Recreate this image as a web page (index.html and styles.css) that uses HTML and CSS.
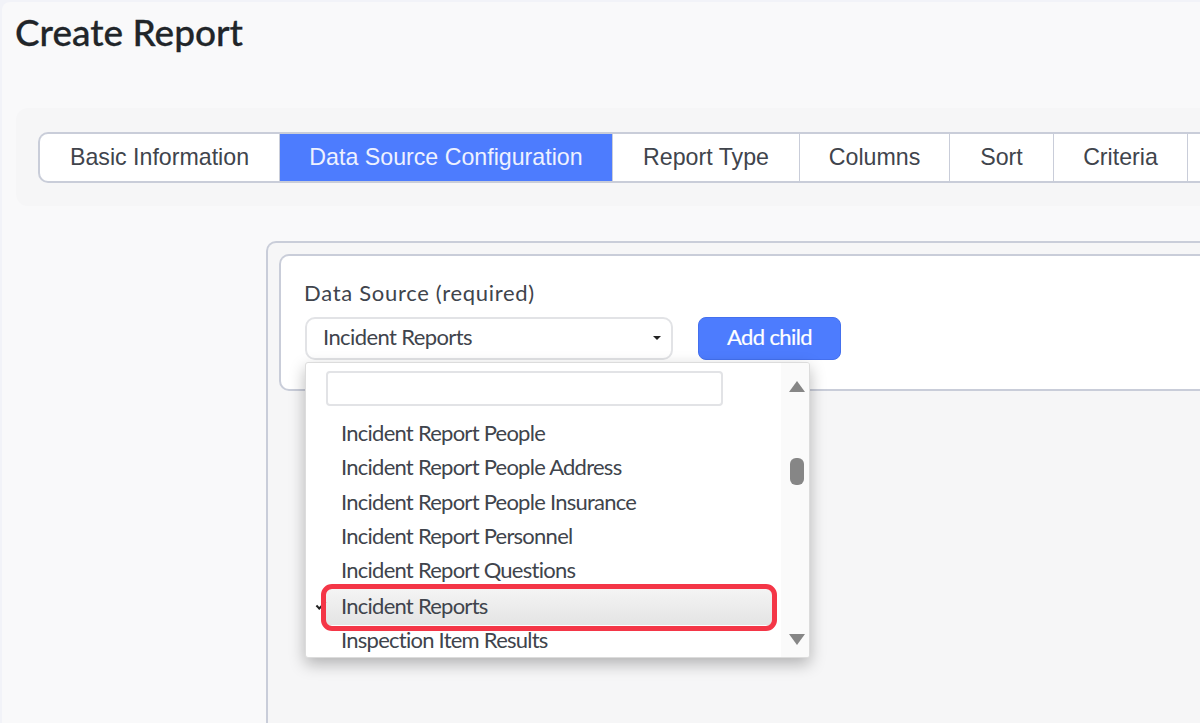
FILE: index.html
```html
<!DOCTYPE html>
<html lang="en">
<head>
  <meta charset="UTF-8">
  <meta name="viewport" content="width=device-width, initial-scale=1.0">
  <title>Create Report</title>
  <link rel="stylesheet" href="styles.css">
</head>
<body>
  <div class="page">
    <h1 class="page-title">Create Report</h1>

    <div class="tab-band">
      <div class="tabs">
        <div class="tab tab-first">Basic Information</div>
        <div class="tab tab-active">Data Source Configuration</div>
        <div class="tab tab-type">Report Type</div>
        <div class="tab tab-columns">Columns</div>
        <div class="tab tab-sort">Sort</div>
        <div class="tab tab-criteria">Criteria</div>
        <div class="tab tab-rest"></div>
      </div>
    </div>

    <div class="panel-outer">
      <div class="panel-inner">
        <label class="field-label">Data Source (required)</label>
        <div class="field-row">
          <div class="select-box">
            <span>Incident Reports</span>
            <span class="caret"></span>
          </div>
          <button class="add-child">Add child</button>
        </div>

        <div class="dropdown">
          <div class="dropdown-main">
            <div class="search-wrap"><input class="search-input" type="text"></div>
            <ul class="options">
              <li>Incident Report People</li>
              <li>Incident Report People Address</li>
              <li>Incident Report People Insurance</li>
              <li>Incident Report Personnel</li>
              <li>Incident Report Questions</li>
              <li class="selected">Incident Reports</li>
              <li>Inspection Item Results</li>
            </ul>
          </div>
          <div class="scrollbar">
            <span class="arrow-up"></span>
            <span class="thumb"></span>
            <span class="arrow-down"></span>
          </div>
        </div>
      </div>
    </div>

    <div class="callout"></div>
  </div>
</body>
</html>
```

FILE: styles.css
```css
html, body {
  margin: 0;
  height: 100%;
  overflow: hidden;
  background-color: #f2f3f8;
}
.page {
  position: relative;
  height: 723px;
  box-sizing: border-box;
  padding: 0 0 0 16px;
  margin-left: 2px;
  margin-top: 2px;
  background-color: #f9f9fa;
  border-radius: 8px 0 0 0;
  font-family: "Lato", sans-serif;
  color: #343a40;
  overflow: hidden;
}
.page-title {
  margin: 0;
  padding-top: 10px;
  margin-left: -3px;
  font-size: 37px;
  line-height: 40px;
  font-weight: 500;
  color: #212529;
  -webkit-text-stroke: 0.3px #212529;
}
.tab-band {
  margin-top: 56px;
  margin-left: -2px;
  height: 98px;
  box-sizing: border-box;
  padding: 24px 0 0 22px;
  background-color: #f6f6f7;
  border-radius: 12px 0 0 12px;
}
.tabs {
  display: flex;
  height: 51px;
  box-sizing: border-box;
  border: 2px solid #c9cdd9;
  border-right: none;
  border-radius: 10px 0 0 10px;
  background-color: #fff;
  font-family: "Liberation Sans", Arial, sans-serif;
  font-size: 23.2px;
  color: #40444c;
}
.tab {
  flex: none;
  display: flex;
  align-items: center;
  justify-content: center;
  box-sizing: border-box;
  border-right: 1px solid #c9cdd9;
}
.tab-first { width: 240px; border-radius: 8px 0 0 8px; }
.tab-active { width: 333px; background-color: #4d7cfe; color: #eef1ff; }
.tab-type { width: 187px; }
.tab-columns { width: 150px; }
.tab-sort { width: 104px; }
.tab-criteria { width: 134px; }
.tab-rest { width: 40px; border-right: none; }
.panel-outer {
  margin-top: 35px;
  margin-left: 248px;
  height: 500px;
  box-sizing: border-box;
  padding: 11px 0 0 11px;
  background-color: #f6f6f7;
  border: 2px solid #c9cdd9;
  border-right: none;
  border-radius: 10px 0 0 0;
}
.panel-inner {
  position: relative;
  height: 137px;
  box-sizing: border-box;
  padding: 23px 0 0 24px;
  background-color: #fff;
  border: 2px solid #c9cdd9;
  border-right: none;
  border-radius: 10px 0 0 10px;
}
.field-label {
  display: block;
  margin-left: -1px;
  font-size: 22px;
  line-height: 28px;
  letter-spacing: 0.7px;
  color: #40444c;
}
.field-row {
  display: flex;
  align-items: flex-start;
  gap: 25px;
  margin-top: 10px;
}
.select-box {
  display: flex;
  align-items: center;
  justify-content: space-between;
  width: 368px;
  height: 43px;
  box-sizing: border-box;
  padding: 0 10px 4px 16px;
  background-color: #fff;
  border: 2px solid #e2e3e6;
  border-radius: 10px;
  font-size: 22px;
  letter-spacing: -0.6px;
  color: #40444c;
}
.caret {
  width: 0;
  height: 0;
  margin-top: 2px;
  border-left: 4.5px solid transparent;
  border-right: 4.5px solid transparent;
  border-top: 4.5px solid #222;
}
.add-child {
  width: 143px;
  height: 43px;
  padding: 0 0 4px;
  background-color: #4d7cfe;
  border: 1px solid #4470ee;
  border-radius: 8px;
  font-family: "Lato", sans-serif;
  font-size: 22px;
  letter-spacing: -0.6px;
  color: #fff;
  -webkit-text-stroke: 0.2px #fff;
}
.dropdown {
  position: absolute;
  left: 24px;
  top: 106px;
  display: flex;
  width: 505px;
  height: 296px;
  box-sizing: border-box;
  background-color: #fff;
  border: 1px solid #dcdcdc;
  border-radius: 3px;
  box-shadow: 0 6px 16px rgba(0, 0, 0, 0.28);
  overflow: hidden;
}
.dropdown-main {
  flex: 1;
  padding: 8px 0 0 20px;
}
.search-input {
  display: block;
  width: 397px;
  height: 35px;
  box-sizing: border-box;
  border: 2px solid #e2e3e6;
  border-radius: 4px;
  background-color: #fff;
}
.options {
  margin: 10px 0 0;
  padding: 0;
  list-style: none;
  font-size: 22px;
  line-height: 34.3px;
  letter-spacing: -0.75px;
  color: #40444c;
}
.options li {
  padding-left: 15px;
  margin-right: 8px;
}
.options .selected {
  position: relative;
  line-height: 38px;
  margin-bottom: -2px;
  background-image: linear-gradient(#f5f5f5, #e4e4e4);
}
.options .selected::before {
  content: "";
  position: absolute;
  left: -10px;
  top: 15px;
  width: 8px;
  height: 3px;
  border-left: 2px solid #222;
  border-bottom: 2px solid #222;
  transform: rotate(-45deg);
}
.scrollbar {
  position: relative;
  width: 28px;
  flex: none;
  background-color: #fafafa;
}
.arrow-up, .arrow-down {
  position: absolute;
  left: 8px;
  width: 0;
  height: 0;
  border-left: 8px solid transparent;
  border-right: 8px solid transparent;
}
.arrow-up { top: 18px; border-bottom: 11px solid #868686; }
.arrow-down { top: 271px; border-top: 11px solid #868686; }
.thumb {
  position: absolute;
  left: 9px;
  top: 95px;
  width: 14px;
  height: 27px;
  background-color: #868686;
  border-radius: 6px;
}
.callout {
  position: absolute;
  left: 319px;
  top: 582px;
  width: 456px;
  height: 47px;
  box-sizing: border-box;
  border: 5px solid #f43647;
  border-radius: 11px;
}
```
